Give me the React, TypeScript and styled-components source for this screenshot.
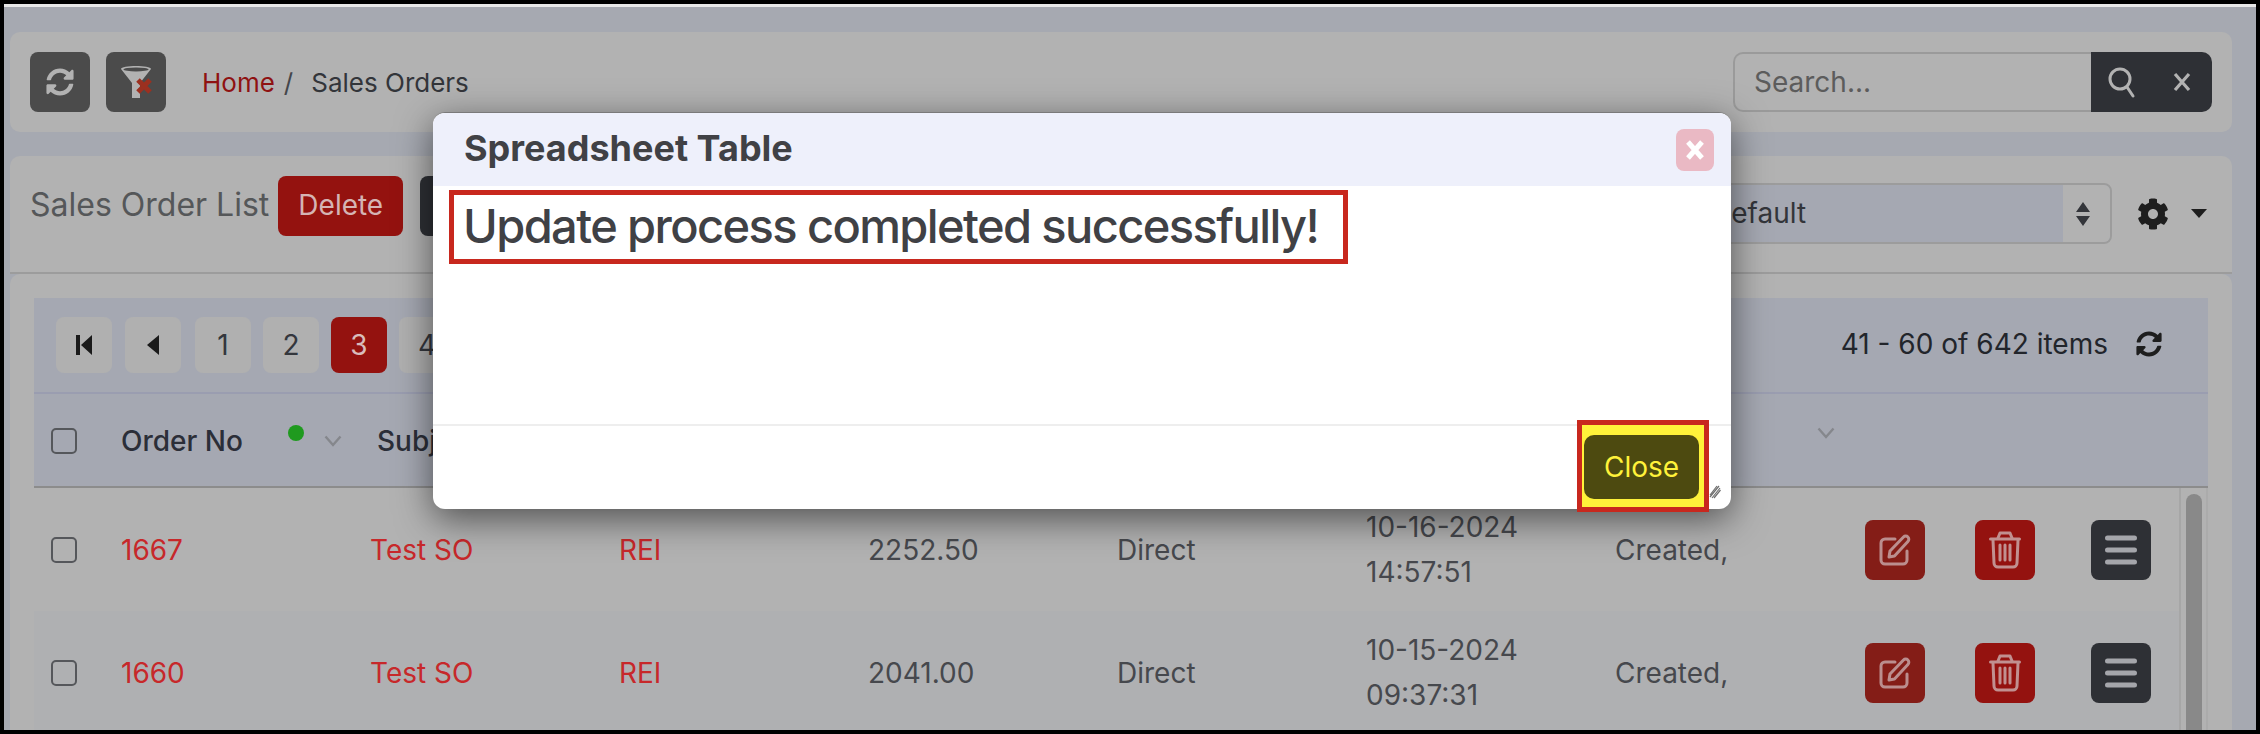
import React from 'react';
import styled, { createGlobalStyle } from 'styled-components';
import { FaSyncAlt, FaCog } from 'react-icons/fa';

const Global = createGlobalStyle`
  html, body { margin: 0; padding: 0; background: #000; }
  body { font-family: Inter, "Liberation Sans", sans-serif; font-size: 28px; color: #46484d; }
  * { box-sizing: border-box; }
`;

const Frame = styled.div`
  position: relative;
  width: 2260px;
  height: 734px;
  border: 4px solid #000;
  overflow: hidden;
  background: #a6a9b1;
`;
const TopEdge = styled.div`
  height: 3px;
  background: #e8e8e8;
`;
const Page = styled.div`
  padding: 25px 24px 0 6px;
`;
const Card = styled.section`
  background: #b2b2b2;
  border-radius: 10px;
`;
const TopBar = styled(Card)`
  height: 100px;
  padding: 20px;
  margin-bottom: 24px;
  display: flex;
  align-items: center;
`;
const IconButton = styled.button<{ $bg: string; $fg?: string }>`
  width: 60px;
  height: 60px;
  padding: 0;
  border: 0;
  border-radius: 8px;
  flex: none;
  background: ${p => p.$bg};
  color: ${p => p.$fg || '#b2b2b2'};
  display: flex;
  align-items: center;
  justify-content: center;
`;
const ToolGroup = styled.div`
  display: flex;
  gap: 16px;
`;
const Crumbs = styled.nav`
  margin-left: 36px;
  display: flex;
  align-items: center;
  font-size: 26px;
  color: #33353a;
  flex: 1;
`;
const HomeLink = styled.a`
  color: #8f1212;
`;
const Slash = styled.span`
  margin: 0 18px 0 9px;
  color: #44464b;
`;
const SearchBox = styled.div`
  display: flex;
  height: 60px;
  width: 479px;
`;
const SearchInput = styled.div`
  width: 358px;
  border: 2px solid #9a9a9a;
  border-right: 0;
  border-radius: 10px 0 0 10px;
  color: #5c5c5c;
  padding-left: 19px;
  display: flex;
  align-items: center;
  font-size: 28px;
`;
const SearchActions = styled.div`
  width: 121px;
  background: #2e3035;
  border-radius: 0 10px 10px 0;
  display: flex;
  align-items: center;
  justify-content: space-between;
  padding: 0 21px 0 15px;
  color: #b2b2b2;
`;
const ListHeader = styled.div`
  height: 116px;
  background: #b2b2b2;
  border-radius: 10px 10px 0 0;
  padding: 20px 0 0 20px;
  display: flex;
  align-items: flex-start;
`;
const Divider = styled.div`
  height: 2px;
  background: #9c9c9c;
`;
const ListTitle = styled.h2`
  margin: 0 9px 0 0;
  font-size: 32px;
  font-weight: 400;
  color: #555759;
  line-height: 58px;
  white-space: nowrap;
`;
const ActionButton = styled.button<{ $bg: string; $w: number }>`
  height: 60px;
  width: ${p => p.$w}px;
  margin-right: 17px;
  padding: 0 0 2px;
  border: 0;
  border-radius: 8px;
  background: ${p => p.$bg};
  color: #d5b4b4;
  font: 400 28px Inter, sans-serif;
`;
const SelectBox = styled.div`
  margin: 7px 0 0 auto;
  width: 412px;
  height: 61px;
  display: flex;
  border: 2px solid #9c9c9c;
  border-radius: 8px;
  background: #a5a8b2;
  overflow: hidden;
`;
const SelectValue = styled.div`
  flex: 1;
  padding: 0 0 2px 9px;
  display: flex;
  align-items: center;
  color: #33353a;
`;
const SelectArrows = styled.div`
  width: 47px;
  background: #b2b2b2;
  padding-right: 8px;
  display: flex;
  align-items: center;
  justify-content: center;
`;
const GearMenu = styled.div`
  width: 120px;
  padding: 7px 25px 0 25px;
  height: 68px;
  display: flex;
  align-items: center;
  justify-content: space-between;
  color: #1e1e1e;
`;
const ListBody = styled(Card)`
  margin-top: 0;
  padding: 24px 24px 0;
  height: 470px;
`;
const Pager = styled.div`
  height: 96px;
  background: #a5a8b2;
  padding: 20px 46px 20px 22px;
  display: flex;
  align-items: center;
  gap: 12px;
  border-bottom: 2px solid #9a9db0;
`;
const PageButton = styled.button<{ $active?: boolean; $extra?: number }>`
  width: 56px;
  height: 56px;
  padding: 0;
  flex: none;
  border: 0;
  border-radius: 8px;
  margin-right: ${p => p.$extra || 0}px;
  background: ${p => (p.$active ? '#94120f' : '#b0b0b0')};
  color: ${p => (p.$active ? '#d9bcbc' : '#34373d')};
  font: 400 28px Inter, sans-serif;
  display: flex;
  align-items: center;
  justify-content: center;
`;
const PageInfo = styled.div`
  margin-left: auto;
  padding-bottom: 2px;
  display: flex;
  align-items: center;
  gap: 28px;
  color: #22252b;
`;
const HeadRow = styled.div`
  height: 94px;
  background: #a5a8b2;
  border-bottom: 2px solid #8c8c8c;
  padding-top: 2px;
  display: grid;
  grid-template-columns: 87px repeat(7, 249px);
  align-items: center;
`;
const HeadCell = styled.div<{ $inset?: number }>`
  display: flex;
  align-items: center;
  padding-left: ${p => p.$inset || 0}px;
  font-weight: 500;
  color: #2b2e38;
  white-space: nowrap;
`;
const Check = styled.span`
  display: block;
  margin-left: 17px;
  width: 26px;
  height: 26px;
  border: 2px solid #55575b;
  border-radius: 5px;
`;
const Dot = styled.span`
  width: 16px;
  height: 16px;
  border-radius: 50%;
  background: #1f9a1f;
  margin: 0 20px 16px 45px;
`;
const Chevron = styled.svg<{ $raised?: boolean }>`
  width: 18px;
  height: 12px;
  margin-bottom: ${p => (p.$raised ? 16 : 0)}px;
  fill: none;
  stroke: #85878c;
  stroke-width: 2.4;
`;
const TableBody = styled.div`
  display: flex;
`;
const Rows = styled.div`
  width: 2145px;
`;
const Row = styled.div<{ $alt?: boolean }>`
  height: 123px;
  background: ${p => (p.$alt ? '#afb0b2' : '#b2b2b2')};
  display: grid;
  grid-template-columns: 87px repeat(7, 249px) 1fr;
  align-items: center;
`;
const LinkCell = styled.div`
  color: #c7282a;
`;
const Cell = styled.div`
  color: #46484d;
`;
const DateCell = styled.div`
  color: #46484d;
  line-height: 45px;
`;
const RowActions = styled.div`
  display: flex;
  gap: 50px;
  margin-left: 1px;
`;
const MenuSlot = styled.div`
  margin-left: 6px;
`;
const ScrollTrack = styled.div`
  width: 29px;
  border-left: 2px solid #a6a6a6;
  border-right: 2px solid #ababab;
  padding: 6px 4px 0 5px;
`;
const ScrollThumb = styled.div`
  height: 400px;
  width: 16px;
  border-radius: 8px;
  background: #898989;
`;

const Modal = styled.div`
  position: absolute;
  left: 429px;
  top: 108px;
  width: 1298px;
  height: 397px;
  background: #fff;
  border-radius: 12px;
  border-top: 1px solid #7a7a7a;
  box-shadow: 0 10px 36px rgba(0, 0, 0, 0.55);
  color: #404145;
`;
const ModalHeader = styled.header`
  height: 73px;
  background: #eef0fb;
  border-radius: 12px 12px 0 0;
  padding: 0 17px 0 31px;
  display: flex;
  align-items: center;
  justify-content: space-between;
`;
const ModalTitle = styled.h3`
  margin: 0 0 3px;
  font-size: 36px;
  font-weight: 700;
  color: #404145;
`;
const DismissButton = styled.button`
  width: 38px;
  height: 42px;
  padding: 0;
  border: 0;
  border-radius: 8px;
  background: #eab9c4;
  color: #fff;
  display: flex;
  align-items: center;
  justify-content: center;
`;
const ModalBody = styled.div`
  height: 238px;
  padding: 4px 0 0 16px;
`;
const Message = styled.div`
  width: 899px;
  height: 74px;
  border: 5px solid #c8281e;
  padding: 0 0 4px 9px;
  display: flex;
  align-items: center;
  font-size: 47px;
  font-weight: 500;
  letter-spacing: -1.6px;
  white-space: nowrap;
  color: #404145;
`;
const ModalFooter = styled.footer`
  height: 85px;
  border-top: 2px solid #eeeeee;
  display: flex;
  justify-content: flex-end;
  padding-right: 22px;
`;
const Highlight = styled.div`
  margin-top: -6px;
  height: 92px;
  width: 132px;
  border: 5px solid #c8281e;
  background: #fff23a;
  padding: 10px 5px 8px 2px;
`;
const CloseButton = styled.button`
  width: 115px;
  height: 64px;
  border: 0;
  border-radius: 10px;
  background: #4d4a10;
  color: #fff23a;
  font: 400 28px Inter, sans-serif;
  padding: 0;
`;
const ResizeGrip = styled.svg`
  position: absolute;
  right: 10px;
  bottom: 10px;
  width: 12px;
  height: 15px;
  stroke: #6e6e6e;
  stroke-width: 1.2;
  fill: none;
`;

const Filter = () => (
  <svg width="32" height="32" viewBox="0 0 32 32">
    <path d="M1 3 C1 -1 31 -1 31 3 L20 17 V32 H12 V17 Z" fill="#b2b2b2" />
    <ellipse cx="16" cy="3.4" rx="12.5" ry="2" fill="#4b4b4b" />
    <path d="M18 14 L30 26 M30 14 L18 26" stroke="#9c3020" strokeWidth="5" />
  </svg>
);
const SearchIcon = () => (
  <svg width="32" height="34" viewBox="0 0 32 34" fill="none" stroke="currentColor" strokeWidth="3" strokeLinecap="round">
    <circle cx="14" cy="14" r="10" />
    <path d="M21 22 L27 31" />
  </svg>
);
const SmallX = ({ weight = 3.2 }: { weight?: number }) => (
  <svg width="18" height="20" viewBox="0 0 18 20" fill="none" stroke="currentColor" strokeWidth={weight}>
    <path d="M2 2 L16 18 M16 2 L2 18" />
  </svg>
);
const UpDown = () => (
  <svg width="16" height="24" viewBox="0 0 16 24" fill="#33353a">
    <path d="M8 0 L15 10 H1 Z M1 14 H15 L8 24 Z" />
  </svg>
);
const Caret = () => (
  <svg width="16" height="9" viewBox="0 0 16 9" fill="#1e1e1e">
    <path d="M0 0 H16 L8 9 Z" />
  </svg>
);
const First = () => (
  <svg width="16" height="20" viewBox="0 0 16 20" fill="#1a1a1a">
    <path d="M0 0 H4 V20 H0 Z M16 0 V20 L5 10 Z" />
  </svg>
);
const Prev = () => (
  <svg width="12" height="20" viewBox="0 0 12 20" fill="#1a1a1a">
    <path d="M12 0 V20 L0 10 Z" />
  </svg>
);
const EditIcon = () => (
  <svg width="32" height="32" viewBox="0 0 32 32" fill="none" stroke="#bb8e8e" strokeWidth="3" strokeLinejoin="round" strokeLinecap="round">
    <path d="M16 5 H6 a4 4 0 0 0 -4 4 V26 a4 4 0 0 0 4 4 H24 a4 4 0 0 0 4 -4 V17" />
    <path d="M10 23 L11 17 L24.5 3 a2.8 2.8 0 0 1 4.4 4.4 L15.5 22 Z" />
  </svg>
);
const TrashIcon = () => (
  <svg width="32" height="38" viewBox="0 0 32 38" fill="none" stroke="#c19090" strokeWidth="3" strokeLinecap="round" strokeLinejoin="round">
    <path d="M1.5 8 H30.5" />
    <path d="M9 7 L11 2 H21 L23 7" />
    <path d="M4 9 L5 32 a4 4 0 0 0 4 4 H24 a4 4 0 0 0 4 -4 L29 9" />
    <path d="M11 14 V29 M16 14 V29 M21 14 V29" />
  </svg>
);
const BarsIcon = () => (
  <svg width="32" height="30" viewBox="0 0 32 30" fill="none" stroke="#a5a6ab" strokeWidth="5" strokeLinecap="round">
    <path d="M2.5 3 H29.5 M2.5 15 H29.5 M2.5 27 H29.5" />
  </svg>
);
const Down = () => <path d="M1.5 1.5 L9 10 L16.5 1.5" />;

const rows = [
  { no: '1667', total: '2252.50', date: '10-16-2024', time: '14:57:51' },
  { no: '1660', total: '2041.00', date: '10-15-2024', time: '09:37:31' },
];

export default function App() {
  return (
    <>
      <Global />
      <Frame>
        <TopEdge />
        <Page>
          <TopBar>
            <ToolGroup>
              <IconButton $bg="#4b4b4b"><FaSyncAlt size={28} /></IconButton>
              <IconButton $bg="#4b4b4b"><Filter /></IconButton>
            </ToolGroup>
            <Crumbs>
              <HomeLink>Home</HomeLink>
              <Slash>/</Slash>
              <span>Sales Orders</span>
            </Crumbs>
            <SearchBox>
              <SearchInput>Search...</SearchInput>
              <SearchActions><SearchIcon /><SmallX /></SearchActions>
            </SearchBox>
          </TopBar>
          <ListHeader>
            <ListTitle>Sales Order List</ListTitle>
            <ActionButton $bg="#94120f" $w={125}>Delete</ActionButton>
            <ActionButton $bg="#2e3035" $w={140} />
            <SelectBox>
              <SelectValue>Default</SelectValue>
              <SelectArrows><UpDown /></SelectArrows>
            </SelectBox>
            <GearMenu><FaCog size={32} /><Caret /></GearMenu>
          </ListHeader>
          <Divider />
          <ListBody>
            <Pager>
              <PageButton $extra={1}><First /></PageButton>
              <PageButton $extra={2}><Prev /></PageButton>
              <PageButton>1</PageButton>
              <PageButton>2</PageButton>
              <PageButton $active>3</PageButton>
              <PageButton>4</PageButton>
              <PageInfo>
                <span>41 - 60 of 642 items</span>
                <FaSyncAlt size={26} color="#1e1e1e" />
              </PageInfo>
            </Pager>
            <HeadRow>
              <Check />
              <HeadCell>
                Order No
                <Dot />
                <Chevron viewBox="0 0 18 12"><Down /></Chevron>
              </HeadCell>
              <HeadCell $inset={7}>Subject</HeadCell>
              <div />
              <div />
              <div />
              <div />
              <HeadCell $inset={202}>
                <Chevron $raised viewBox="0 0 18 12"><Down /></Chevron>
              </HeadCell>
            </HeadRow>
            <TableBody>
              <Rows>
                {rows.map((r, i) => (
                  <Row key={r.no} $alt={i % 2 === 1}>
                    <Check />
                    <LinkCell>{r.no}</LinkCell>
                    <LinkCell>Test SO</LinkCell>
                    <LinkCell>REI</LinkCell>
                    <Cell>{r.total}</Cell>
                    <Cell>Direct</Cell>
                    <DateCell>{r.date}<br />{r.time}</DateCell>
                    <Cell>Created,</Cell>
                    <RowActions>
                      <IconButton $bg="#841d17"><EditIcon /></IconButton>
                      <IconButton $bg="#94120f"><TrashIcon /></IconButton>
                      <MenuSlot><IconButton $bg="#2e3035"><BarsIcon /></IconButton></MenuSlot>
                    </RowActions>
                  </Row>
                ))}
              </Rows>
              <ScrollTrack><ScrollThumb /></ScrollTrack>
            </TableBody>
          </ListBody>
        </Page>
        <Modal>
          <ModalHeader>
            <ModalTitle>Spreadsheet Table</ModalTitle>
            <DismissButton><SmallX weight={5} /></DismissButton>
          </ModalHeader>
          <ModalBody>
            <Message>Update process completed successfully!</Message>
          </ModalBody>
          <ModalFooter>
            <Highlight><CloseButton>Close</CloseButton></Highlight>
          </ModalFooter>
          <ResizeGrip viewBox="0 0 12 15">
            <path d="M1 13 L10 2 M3 14 L11 4 M5 14 L11.5 6 M1 11 L8 2" />
          </ResizeGrip>
        </Modal>
      </Frame>
    </>
  );
}
